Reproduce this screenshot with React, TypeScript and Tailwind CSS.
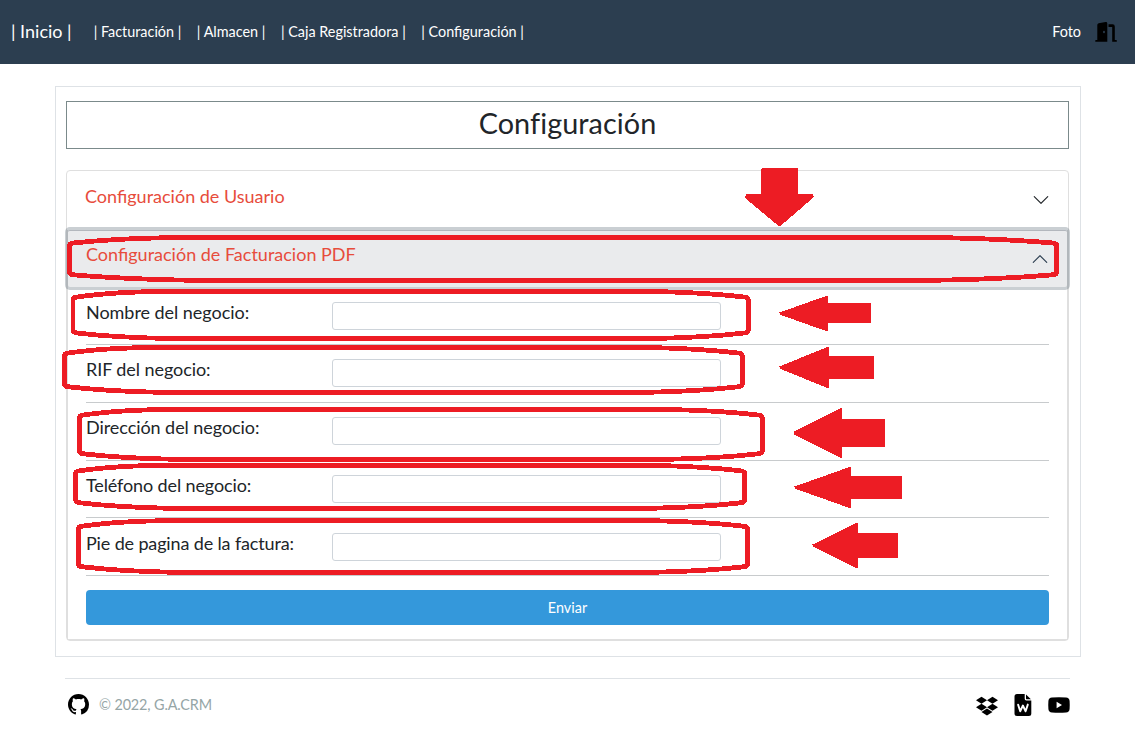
import React from "react";
import { BsGithub, BsDropbox } from "react-icons/bs";

const fields = [
  { label: "Nombre del negocio:", box: "h-[55px] pt-[12px]", track: "tracking-[-0.04px]" },
  { label: "RIF del negocio:", box: "h-[58px] pt-[14px]", track: "tracking-[-0.08px]" },
  { label: "Dirección del negocio:", box: "h-[58px] pt-[14px]", track: "tracking-[-0.06px]" },
  { label: "Teléfono del negocio:", box: "h-[57px] pt-[14px]", track: "tracking-[-0.12px]" },
  { label: "Pie de pagina de la factura:", box: "h-[58px] pt-[15px]", track: "tracking-[-0.14px]" },
];

// left, right, top, bottom, curve length of each hand-drawn outline
const outlines = [
  [69.5, 1056.7, 237.5, 280.3, 125],
  [73, 748.3, 291.5, 338.5, 95],
  [64.5, 742.3, 347.5, 392.3, 95],
  [79.5, 762.3, 409.5, 459.3, 95],
  [75.7, 744.5, 465.3, 508.3, 95],
  [78.3, 747.5, 520.7, 572.3, 95],
];

// tip x, tip y, head x, head half height, shaft top, shaft bottom, right
const arrows = [
  [779.5, 313.5, 827.5, 17.5, 303, 323, 871],
  [779.5, 367.5, 828.7, 20.5, 356, 379, 874],
  [793.5, 433, 842, 25, 419, 447, 885],
  [794.5, 487.5, 851, 20.5, 476, 499, 902],
  [812.5, 545.5, 858, 22.5, 533, 558, 898],
];

function outlinePath([l, r, t, b, k]: number[]) {
  return `M${l} ${t + 8} Q${l} ${t + 6} ${l + 4} ${t + 5.5} Q${l + k * 0.45} ${t} ${l + k} ${t} H${r - k} Q${r - k * 0.45} ${t + 1} ${r - 4} ${t + 5.5} Q${r} ${t + 6} ${r} ${t + 8} V${b - 8} Q${r} ${b - 6} ${r - 4} ${b - 5.5} Q${r - k * 0.45} ${b - 1} ${r - k} ${b} H${l + k} Q${l + k * 0.45} ${b - 1} ${l + 4} ${b - 5.5} Q${l} ${b - 6} ${l} ${b - 8} Z`;
}

function arrowPath([x, y, h, d, t, b, r]: number[]) {
  return `M${x} ${y - 1} L${h - 1.5} ${y - d} H${h} V${t} H${r - 1} L${r} ${t + 1} V${b} H${h} V${y + d} H${h - 1.5} L${x} ${y + 1} Z`;
}

function Annotations() {
  return (
    <svg
      className="pointer-events-none absolute left-0 top-0"
      width="1135"
      height="736"
      viewBox="0 0 1135 736"
      shapeRendering="crispEdges"
    >
      <g fill="none" stroke="#ed1c24" strokeWidth="4.8">
        {outlines.map((o, i) => (
          <path key={i} d={outlinePath(o)} />
        ))}
      </g>
      <g fill="#ed1c24">
        {arrows.map((a, i) => (
          <path key={i} d={arrowPath(a)} />
        ))}
        <path d="M761 169 L762 168 H797 L798 169 V194 H813 L814 197 L781 225.5 H778 L745 198 L746 194 H761 Z" />
      </g>
    </svg>
  );
}

function Chevron({ up = false }: { up?: boolean }) {
  return (
    <svg width="18" height="18" viewBox="0 0 16 16" fill={up ? "#2c3e50" : "#212529"}>
      <path
        fillRule="evenodd"
        d={
          up
            ? "M14.354 11.354a.5.5 0 0 1-.708 0L8 5.707l-5.646 5.647a.5.5 0 0 1-.708-.708l6-6a.5.5 0 0 1 .708 0l6 6a.5.5 0 0 1 0 .708z"
            : "M1.646 4.646a.5.5 0 0 1 .708 0L8 10.293l5.646-5.647a.5.5 0 0 1 .708.708l-6 6a.5.5 0 0 1-.708 0l-6-6a.5.5 0 0 1 0-.708z"
        }
      />
    </svg>
  );
}

function DoorIcon() {
  return (
    <svg className="ml-[14px]" width="22" height="22" viewBox="0 0 22 22" fill="#000">
      <path
        fillRule="evenodd"
        d="M2.3 4 Q2.3 2.6 3.6 2.2 L10.6 1.1 Q12.3 .9 12.3 2.4 V20.8 H.9 Q.2 20.8 .2 19.9 T.9 19 H2.3 Z M9 9.8 a.9 1.2 0 1 0 0 2.4 a.9 1.2 0 1 0 0-2.4 Z"
      />
      <path d="M13.5 3.3 H17.6 Q19.8 3.3 19.8 5.5 V19 H21.2 Q21.9 19 21.9 19.9 T21.2 20.8 H17.2 V5.9 H13.5 Z" />
    </svg>
  );
}

function WordFileIcon() {
  return (
    <svg width="22" height="22" viewBox="0 0 22 22">
      <path
        fill="#000"
        d="M5 0 H12.7 V4.8 Q12.7 6.4 14.3 6.4 H19.3 V19.5 Q19.3 22 16.8 22 H5 Q2.5 22 2.5 19.5 V2.5 Q2.5 0 5 0 Z M14 .5 L18.9 5.3 H14.8 Q14 5.3 14 4.4 Z"
      />
      <path
        d="M6.1 10.6 L8.2 17.3 L10.9 11.5 L13.6 17.3 L15.8 10.6"
        fill="none"
        stroke="#fff"
        strokeWidth="1.9"
        strokeLinecap="round"
        strokeLinejoin="round"
      />
    </svg>
  );
}

function VideoIcon() {
  return (
    <svg width="22" height="22" viewBox="0 0 22 22">
      <path
        fill="#000"
        fillRule="evenodd"
        d="M4 3.5 Q11 2.9 18 3.5 Q21.3 3.7 21.6 7 Q21.9 11 21.6 15 Q21.3 18.3 18 18.5 Q11 19 4 18.5 Q.7 18.3 .4 15 Q.1 11 .4 7 Q.7 3.7 4 3.5 Z M8.6 7.8 V14.2 L14 11 Z"
      />
    </svg>
  );
}

export default function App() {
  return (
    <div className="relative h-[736px] w-[1135px] overflow-hidden bg-white font-[Lato,sans-serif] text-[#212529]">
      <nav className="flex h-16 items-center bg-[#2c3e50] pl-[11px] pr-[18px] text-[14.4px] text-white">
        <a className="mr-[22px] whitespace-nowrap pb-px text-[18px]">| Inicio |</a>
        <div className="flex flex-1 gap-[15.5px] whitespace-nowrap pb-px">
          <a>| Facturación |</a>
          <a>| Almacen |</a>
          <a>| Caja Registradora |</a>
          <a>| Configuración |</a>
        </div>
        <span className="pb-px">Foto</span>
        <DoorIcon />
      </nav>

      <main className="ml-[55px] mr-[54px] mt-[22px] h-[571px] border border-[#dee2e6] px-[10px] pt-[14px]">
        <h1 className="flex h-12 w-[1003px] items-center justify-center border border-[#7b8a8b] pb-[3px] text-[28.8px] leading-none tracking-[0.06px]">
          Configuración
        </h1>

        <section className="mt-[21px] h-[471px] w-[1003px] rounded-[4px] border border-[#dfdfdf]">
          <button className="flex h-[57px] w-full items-center justify-between pl-[18px] pr-[18px] text-left text-[18px] text-[#e74c3c]">
            <span className="pb-[6px]">Configuración de Usuario</span>
            <Chevron />
          </button>
          <div className="mt-[2px] h-[410px] border-x border-b border-[#dfdfdf]">
            <button className="flex h-[57px] w-full items-center justify-between rounded-[2px] border-t border-[#b3b7bd] bg-[#eaebed] pl-[18px] pr-[18px] text-left text-[18px] text-[#e74c3c] shadow-[0_0_0_3px_rgba(44,62,80,0.25)]">
              <span className="pb-[9px]">Configuración de Facturacion PDF</span>
              <Chevron up />
            </button>
            <form className="px-[18px] pt-[3px]">
              {fields.map((f) => (
                <div key={f.label} className={`flex border-b border-[#c8cbcd] ${f.box}`}>
                  <label className={`-mt-px w-[246px] text-[18px] leading-[22px] ${f.track}`}>
                    {f.label}
                  </label>
                  <input className="h-7 w-[389px] rounded-[3px] border border-[#ced4da] bg-white" />
                </div>
              ))}
              <button
                type="button"
                className="mt-[14px] h-[35px] w-full rounded-[4px] bg-[#3498db] text-[14.4px] text-white"
              >
                Enviar
              </button>
            </form>
          </div>
        </section>
      </main>

      <footer className="mx-[65px] mt-[21px] flex h-[53px] items-center border-t border-[#dee2e6] pl-[3px] text-black">
        <BsGithub className="-mt-px" size={21} />
        <span className="ml-[10px] flex-1 text-[14.4px] tracking-[-0.12px] text-[#95a5a6]">
          © 2022, G.A.CRM
        </span>
        <div className="flex gap-[14px]">
          <BsDropbox size={22} />
          <WordFileIcon />
          <VideoIcon />
        </div>
      </footer>
      <Annotations />
    </div>
  );
}
